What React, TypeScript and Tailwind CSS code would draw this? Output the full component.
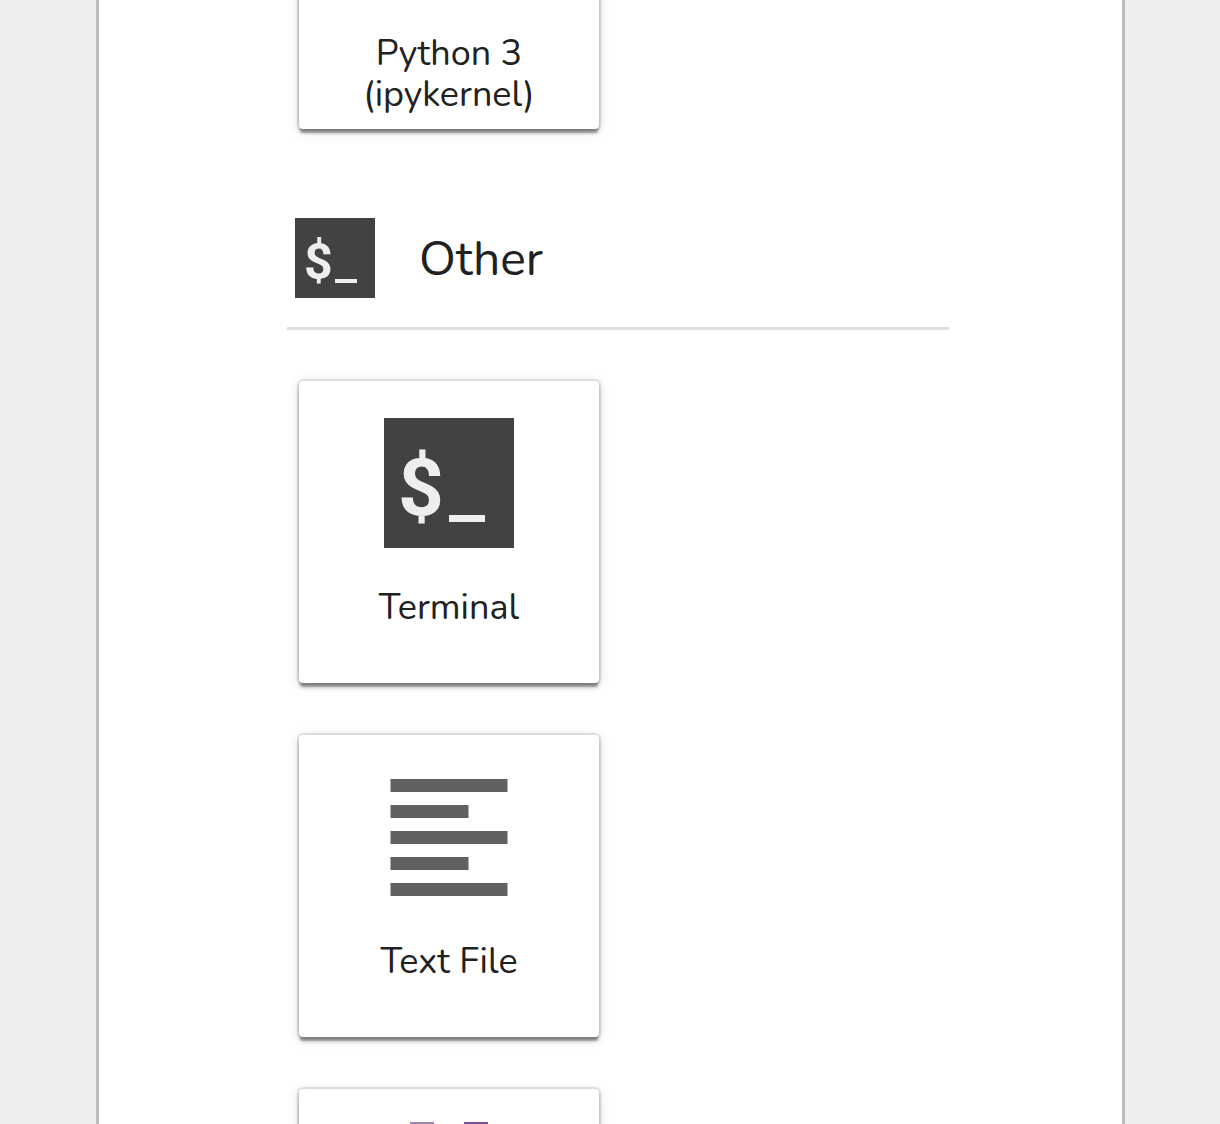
import React from "react";

function TerminalIcon({ size }: { size: "lg" | "sm" }) {
  if (size === "sm") {
    return (
      <div className="relative h-20 w-20 shrink-0 bg-[#424242]">
        <span className="absolute left-[9px] top-[17px] font-['Roboto',sans-serif] text-[50px] leading-[54px] font-bold text-[#eeeeee]">$</span>
        <span className="absolute left-10 top-[61px] h-1 w-[22px] bg-[#eeeeee]" />
      </div>
    );
  }
  return (
    <div className="relative h-[130px] w-[130px] bg-[#424242]">
      <span className="absolute left-[14px] top-[28px] font-['Roboto',sans-serif] text-[80px] leading-[84px] font-bold text-[#eeeeee]">$</span>
      <span className="absolute left-[65px] top-[97px] h-[7px] w-9 bg-[#eeeeee]" />
    </div>
  );
}

function TextFileIcon() {
  return (
    <svg width="130" height="130" viewBox="0 0 130 130" fill="#616161">
      <rect x="6.5" y="7" width="117" height="13" />
      <rect x="6.5" y="33" width="78" height="13" />
      <rect x="6.5" y="59" width="117" height="13" />
      <rect x="6.5" y="85" width="78" height="13" />
      <rect x="6.5" y="111" width="117" height="13" />
    </svg>
  );
}

function PurpleIcon() {
  return (
    <svg width="130" height="130" viewBox="0 0 130 130" className="overflow-visible">
      <rect x="26" y="-4" width="24" height="60" fill="#a384b3" />
      <rect x="80" y="-4" width="24" height="60" fill="#7b4f96" />
    </svg>
  );
}

function Card({ icon, lines }: { icon: React.ReactNode; lines: string[] }) {
  return (
    <div className="flex h-[302px] w-[300px] flex-col items-center rounded bg-white pt-[37.3px] shadow-[0_0_1px_2px_rgba(0,0,0,0.1),0_4px_4px_0_rgba(0,0,0,0.14),0_5px_2px_-1px_rgba(0,0,0,0.3),0_2px_12px_0_rgba(0,0,0,0.16)]">
      <div className="h-[130px] w-[130px]">{icon}</div>
      <div className="mt-[38.7px] text-center text-[36px] leading-[41px] text-[#212121]">
        {lines.map((line) => (
          <div key={line}>{line}</div>
        ))}
      </div>
    </div>
  );
}

export default function App() {
  return (
    <div className="h-[1124px] overflow-hidden bg-[#eeeeee] px-24 font-['Nunito','Lato','Noto_Sans',sans-serif]">
      <div className="h-full w-[1029px] overflow-hidden border-x-[3px] border-[#bdbdbd] bg-white pl-[188px]">
        <div className="-mt-[173px] pl-3">
          <Card icon={null} lines={["Python 3", "(ipykernel)"]} />
        </div>

        {/* Other section */}
        <div className="mt-[89.3px] w-[662px]">
          <div className="flex h-20 items-center gap-11 pl-2">
            <TerminalIcon size="sm" />
            <h2 className="pt-0.5 text-[48px] font-normal text-[#212121]">Other</h2>
          </div>
          <div className="mt-[29px] h-[3px] bg-[#e0e0e0]" />
        </div>

        <div className="mt-[50.7px] flex flex-col gap-[52px] pl-3">
          <Card icon={<TerminalIcon size="lg" />} lines={["Terminal"]} />
          <Card icon={<TextFileIcon />} lines={["Text File"]} />
          <Card icon={<PurpleIcon />} lines={[]} />
        </div>
      </div>
    </div>
  );
}
